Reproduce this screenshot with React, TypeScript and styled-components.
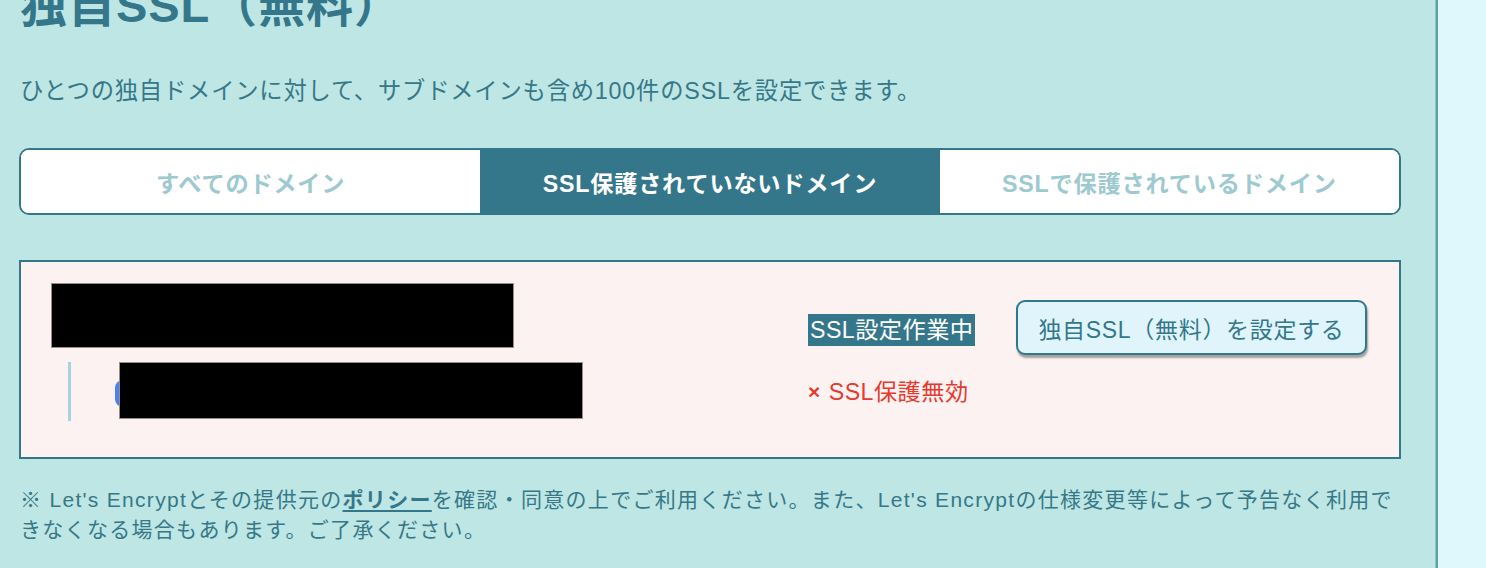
import React from 'react';
import styled, { createGlobalStyle } from 'styled-components';

const teal = '#35778a';
const text = '#367887';

const GlobalStyle = createGlobalStyle`
  html, body {
    margin: 0;
    padding: 0;
    background: #dff8fb;
  }
  body {
    font-family: "Liberation Sans", "Noto Sans CJK JP", sans-serif;
    color: ${text};
    letter-spacing: 0.05em;
  }
`;

const Page = styled.div`
  display: flex;
  min-height: 568px;
  overflow: hidden;
`;

const Main = styled.main`
  box-sizing: border-box;
  width: 1438px;
  flex: none;
  padding: 0 35px 40px 19px;
  background: #bee6e5;
  border-right: 2px solid #5f9fa3;
  box-shadow: inset -1px 0 0 #8cc6c7;
`;

const Aside = styled.div`
  flex: 1;
  background: #dff8fb;
`;

const Title = styled.h1`
  margin: -18px 0 0 1px;
  font-size: 47px;
  line-height: 47px;
  font-weight: bold;
  letter-spacing: 0.02em;
  color: ${teal};
`;

const Lead = styled.p`
  margin: 46px 0 0 1px;
  font-size: 23.3px;
  line-height: 33px;
`;

const Tabs = styled.div`
  display: flex;
  height: 67px;
  box-sizing: border-box;
  margin-top: 40px;
  border: 2px solid ${teal};
  border-radius: 10px;
  background: #fff;
  overflow: hidden;
`;

const Tab = styled.div<{ $active?: boolean }>`
  flex: 1;
  display: flex;
  align-items: center;
  justify-content: center;
  font-size: 23.2px;
  font-weight: bold;
  color: ${p => (p.$active ? '#fff' : '#9dc9d0')};
  background: ${p => (p.$active ? teal : '#fff')};
  cursor: pointer;
`;

const DomainCard = styled.section`
  box-sizing: border-box;
  margin-top: 45px;
  padding: 21px 32px 36px 30px;
  border: 2px solid ${teal};
  background: #fdf2f2;
`;

const Row = styled.div<{ $gap?: number }>`
  display: grid;
  grid-template-columns: 1fr 208px 351px;
  align-items: start;
  margin-top: ${p => p.$gap ?? 0}px;
`;

const Redacted = styled.div<{ $w: number; $h: number; $shift?: number }>`
  box-sizing: border-box;
  width: ${p => p.$w}px;
  height: ${p => p.$h}px;
  margin-left: ${p => p.$shift ?? 0}px;
  background: #000;
  border: 1px solid #9a8c8c;
  position: relative;
`;

const SubDomain = styled.div`
  display: flex;
  align-items: flex-start;
  padding-left: 17px;
`;

const TreeBar = styled.span`
  width: 3px;
  height: 59px;
  background: #a7d5dc;
`;

const DomainLink = styled.div`
  position: relative;
  margin-left: 44px;
  display: flex;
`;

const DomainIcon = styled.span`
  position: absolute;
  left: 0;
  top: 18px;
  width: 27px;
  height: 27px;
  border-radius: 8px;
  background: #4a80f0;
`;

const StatusCell = styled.div<{ $top: number }>`
  padding-top: ${p => p.$top}px;
`;

const WorkingBadge = styled.span`
  display: inline-block;
  padding: 0 2px;
  font-size: 23.2px;
  line-height: 32px;
  letter-spacing: 0.02em;
  color: #fff;
  background: ${teal};
`;

const Invalid = styled.div`
  display: flex;
  align-items: center;
  font-size: 23.2px;
  line-height: 30px;
  color: #e53a2e;
  letter-spacing: 0.02em;

  b {
    font-size: 21px;
    margin-right: 8px;
  }
`;

const SetupButton = styled.button`
  box-sizing: border-box;
  width: 351px;
  height: 55px;
  margin-top: 17px;
  border: 2px solid ${teal};
  border-radius: 9px;
  background: #dff5fb;
  box-shadow: 1px 3px 2px rgba(60, 60, 60, 0.45);
  font-family: inherit;
  font-size: 23px;
  letter-spacing: 0.03em;
  color: ${teal};
  cursor: pointer;
`;

const Note = styled.p`
  margin: 26px 0 0 1px;
  font-size: 21px;
  line-height: 30px;
  letter-spacing: 1.3px;

  a {
    color: ${teal};
    font-weight: bold;
    text-decoration: underline;
    text-underline-offset: 3px;
  }
`;

const tabs = ['すべてのドメイン', 'SSL保護されていないドメイン', 'SSLで保護されているドメイン'];

export default function App() {
  return (
    <>
      <GlobalStyle />
      <Page>
        <Main>
          <Title>独自SSL（無料）</Title>
          <Lead>ひとつの独自ドメインに対して、サブドメインも含め100件のSSLを設定できます。</Lead>

          <Tabs>
            {tabs.map((label, i) => (
              <Tab key={label} $active={i === 1}>{label}</Tab>
            ))}
          </Tabs>

          <DomainCard>
            <Row>
              <Redacted $w={463} $h={65} />
              <StatusCell $top={31}>
                <WorkingBadge>SSL設定作業中</WorkingBadge>
              </StatusCell>
              <div>
                <SetupButton>独自SSL（無料）を設定する</SetupButton>
              </div>
            </Row>
            <Row $gap={7}>
              <SubDomain>
                <TreeBar />
                <DomainLink>
                  <DomainIcon />
                  <Redacted $w={464} $h={57} $shift={4} />
                </DomainLink>
              </SubDomain>
              <StatusCell $top={15}>
                <Invalid><b>×</b>SSL保護無効</Invalid>
              </StatusCell>
            </Row>
          </DomainCard>

          <Note>
            ※ Let's Encryptとその提供元の<a href="#">ポリシー</a>を確認・同意の上でご利用ください。また、Let's Encryptの仕様変更等によって予告なく利用できなくなる場合もあります。ご了承ください。
          </Note>
        </Main>
        <Aside />
      </Page>
    </>
  );
}
